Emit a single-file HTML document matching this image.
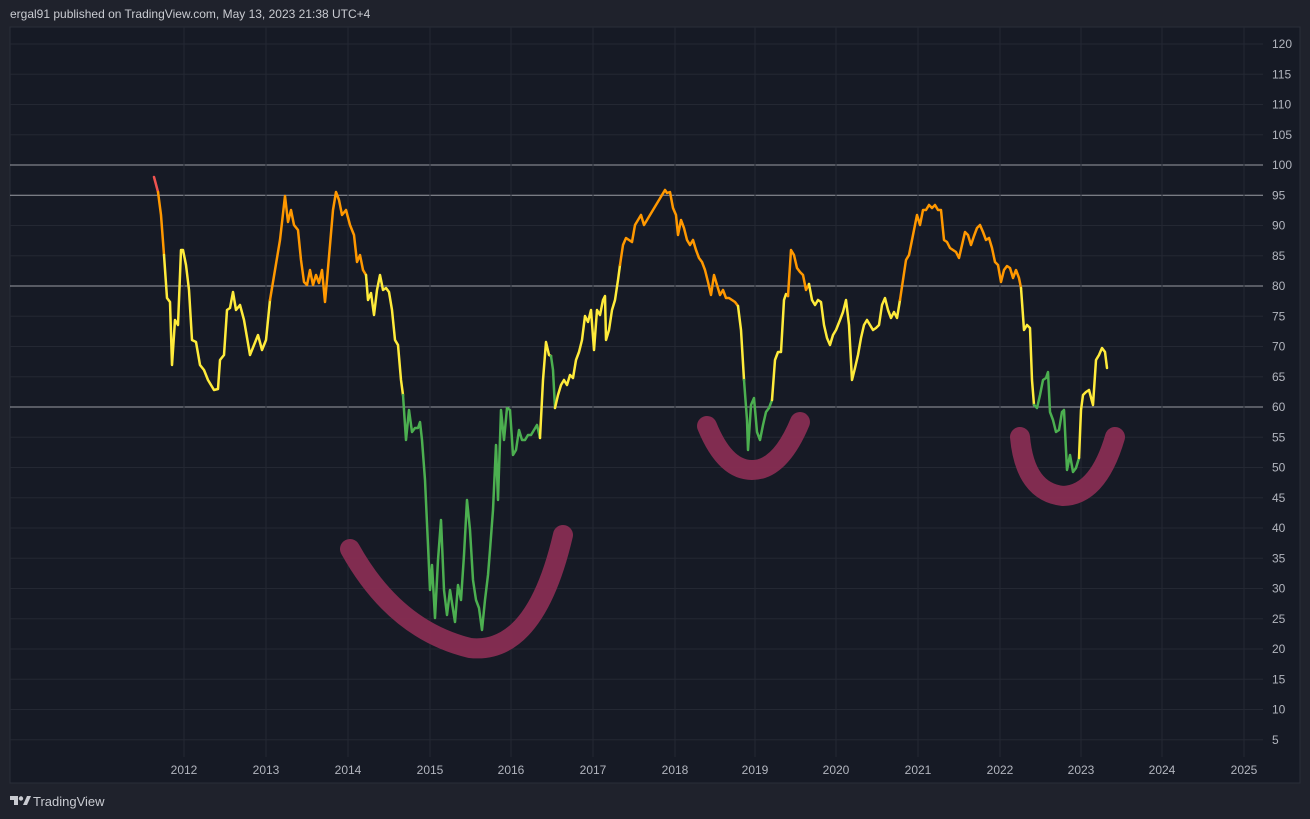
<!DOCTYPE html>
<html><head><meta charset="utf-8"><style>
html,body{margin:0;padding:0;background:#1f222c;width:1310px;height:819px;overflow:hidden;font-family:"Liberation Sans",sans-serif}
.t{position:absolute;left:10px;top:7px;color:#c9cbd1;font-size:12px}
.b{position:absolute;left:33px;top:794px;color:#c9cbd1;font-size:13px}
</style></head><body>
<div class="t">ergal91 published on TradingView.com, May 13, 2023 21:38 UTC+4</div>
<svg style="position:absolute;left:0;top:0" width="1310" height="819">
<rect x="10" y="27" width="1290" height="756" fill="#161a25" stroke="#2a2e39" stroke-width="1"/>
<g stroke="#242833" stroke-width="1" id="g"></g>
<g id="lab" fill="#b2b5be" font-size="12" font-family="Liberation Sans,sans-serif"></g>
<g id="ln" fill="none" stroke-width="2.5" stroke-linejoin="round" stroke-linecap="round"></g>
<g fill="none" stroke="#852d52" stroke-width="20" stroke-linecap="round" opacity="0.97">
<path d="M350,549 Q395,630 470,648 Q535,655 563,535"/>
<path d="M707,426 Q725,470 752,470 Q780,470 800,422"/>
<path d="M1020,437 Q1025,492 1063,496 Q1098,495 1115,437"/>
</g>
<g transform="translate(10,794)" fill="#c9cbd1"><path d="M0,2h8v9h-4v-5h-4z"/><circle cx="11" cy="4.5" r="2.2"/><path d="M13,11l4-9h4l-4,9z"/></g>
</svg>
<div class="b">TradingView</div>
<script>
var ns="http://www.w3.org/2000/svg";
function el(p,t,a,txt){var e=document.createElementNS(ns,t);for(var k in a)e.setAttribute(k,a[k]);if(txt)e.textContent=txt;document.getElementById(p).appendChild(e);}
function Y(v){return 165+(100-v)*6.05;}
for(var v=5;v<=120;v+=5){var y=Y(v);var hl=(v==100||v==95||v==80||v==60);
el('g','line',{x1:10,x2:1263,y1:y,y2:y,stroke:hl?'#9a9ca3':'#242833'});
el('lab','text',{x:1272,y:y+4},String(v));}
var xs=[184,266,348,430,511,593,675,755,836,918,1000,1081,1162,1244];
xs.forEach(function(x,i){el('g','line',{x1:x,x2:x,y1:27,y2:757});el('lab','text',{x:x,y:774,'text-anchor':'middle'},String(2012+i));});
var segs=[
['#ef5350','154,177 158,192'],
['#ff9800','158,192 161,215 164,255'],
['#ffeb3b','164,255 167,298 170,302 172,365 175,320 178,325 181,250 183,250 186,265 189,290 192,340 196,342 200,365 204,370 208,380 214,390 218,389 220,360 224,355 227,310 230,308 233,292 236,310 240,305 244,320 250,355 254,345 258,335 262,350 266,340 270,300'],
['#ff9800','270,300 275,270 280,240 285,196 288,222 291,210 294,225 298,230 301,260 304,282 307,285 310,270 313,285 316,275 319,283 322,270 325,302 327,280 330,245 333,210 336,192 339,200 342,215 346,210 350,225 354,235 357,262 360,255 363,270 366,275'],
['#ffeb3b','366,275 368,300 371,293 374,315 377,290 380,275 383,290 386,288 389,292 392,310 395,340 398,345 401,380 403,395'],
['#4caf50','403,395 406,440 409,410 412,432 415,428 418,428 420,422 422,440 425,480 428,545 430,590 432,565 435,618 438,560 441,520 444,590 447,615 450,590 455,622 458,585 461,600 464,555 467,500 470,530 473,580 476,600 479,608 482,630 485,600 488,575 490,550 493,510 496,445 498,500 501,410 504,440 507,408 510,410 513,455 516,450 519,430 522,440 525,440 528,435 531,435 534,430 537,425 540,438'],
['#ffeb3b','540,438 543,380 546,342 549,355 551,356'],
['#4caf50','551,356 553,370 555,408'],
['#ffeb3b','555,408 558,395 561,385 564,380 567,385 570,375 573,378 576,360 579,352 582,340 585,316 588,322 591,310 594,350 597,310 600,315 603,300 605,296 606,340 609,330 612,310 615,300 618,280 620,265'],
['#ff9800','620,265 623,245 626,238 629,240 632,242 635,225 638,220 641,215 644,225 647,220 650,215 653,210 656,205 659,200 662,195 665,190 667,193 670,192 673,208 676,215 678,235 681,220 684,228 687,240 690,245 693,240 696,250 699,258 702,262 705,270 708,282 711,295 714,275 717,285 720,295 723,290 726,298 729,298 732,300 735,302 738,306'],
['#ffeb3b','738,306 741,330 744,380'],
['#4caf50','744,380 747,420 748,450 751,405 754,398 757,432 760,440 763,425 766,412 769,408 772,400'],
['#ffeb3b','772,400 775,360 778,352 781,352 784,300 786,294 788,296'],
['#ff9800','788,296 791,250 794,255 797,268 800,272 803,275 806,290 809,284'],
['#ffeb3b','809,284 812,300 815,305 818,300 821,302 824,325 827,338 830,345 833,335 836,330 840,320 843,312 846,300 849,325 852,380 855,368 858,355 861,338 864,325 867,320 870,325 873,330 876,328 879,325 882,305 885,298 888,310 891,318 894,312 897,318 900,300'],
['#ff9800','900,300 903,280 906,260 909,255 912,240 914,230 917,215 920,225 923,210 926,210 929,205 932,208 935,205 938,210 941,210 944,240 947,242 950,248 953,250 956,252 959,258 962,245 965,232 968,235 971,245 974,236 977,228 980,225 983,232 986,240 989,238 992,248 995,262 998,265 1001,282 1004,270 1007,266 1010,268 1013,278 1016,270 1019,278 1021,288'],
['#ffeb3b','1021,288 1024,330 1027,325 1030,328 1032,380 1034,405'],
['#4caf50','1034,405 1037,408 1040,395 1043,380 1046,378 1048,372 1050,412 1053,420 1056,432 1059,430 1062,412 1064,410 1067,470 1070,455 1073,472 1076,468 1079,458'],
['#ffeb3b','1079,458 1081,410 1083,395 1086,392 1089,390 1093,405 1096,360 1099,355 1102,348 1105,352 1107,368']];
segs.forEach(function(s){el('ln','polyline',{points:s[1],stroke:s[0]});});
</script>
</body></html>
